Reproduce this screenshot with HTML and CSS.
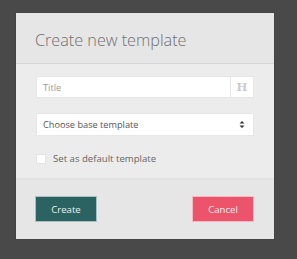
FILE: index.html
```html
<!DOCTYPE html>
<html>
<head><meta charset="utf-8"><link rel="stylesheet" href="styles.css"></head>
<body>
<div class="modal">
  <div class="modal-header">Create new template</div>
  <div class="modal-body">
    <div class="input-group">
      <span class="input-text">Title</span>
      <span class="input-addon">H</span>
    </div>
    <div class="select">
      <span class="input-text dark">Choose base template</span>
      <svg class="caret" width="6" height="9" viewBox="0 0 6 9"><path d="M0.5 3.5 L3 1 L5.5 3.5 Z M0.5 5.5 L3 8 L5.5 5.5 Z" fill="#333"/></svg>
    </div>
    <label class="check"><span class="box"></span><span>Set as default template</span></label>
  </div>
  <div class="modal-footer">
    <button class="btn btn-create">Create</button>
    <button class="btn btn-cancel">Cancel</button>
  </div>
</div>
</body>
</html>
```
FILE: styles.css
```css
html, body { margin: 0; padding: 0; }
body {
  background: #494949;
  width: 297px;
  height: 259px;
  font-family: "Open Sans", sans-serif;
  padding: 13px 0 0 16px;
  box-sizing: border-box;
}
.modal {
  width: 258px;
  background: #ececec;
  box-shadow: 0 0 1px rgba(0,0,0,0.4);
}
.modal-header {
  background: #e6e6e6;
  height: 51px;
  border-bottom: 1px solid #d6d6d6;
  box-sizing: border-box;
  padding: 16px 0 0 19px;
  font-size: 16.2px;
  font-weight: 300;
  color: #707070;
  line-height: 22px;
}
.modal-body {
  padding: 12px 20px 0 20px;
  height: 116px;
  box-sizing: border-box;
  border-bottom: 2px solid #e2e2e2;
}
.input-group, .select {
  height: 22px;
  background: #fff;
  display: flex;
  align-items: center;
  border: 1px solid #e6e6e6;
  box-sizing: border-box;
  width: 218px;
}
.input-text {
  flex: 1;
  padding-left: 6px;
  font-size: 9.2px;
  color: #999;
}
.input-text.dark { color: #555; }
.input-addon {
  width: 22px;
  height: 20px;
  border-left: 1px solid #e6e6e6;
  display: flex;
  align-items: center;
  justify-content: center;
  font-family: "DejaVu Serif", serif;
  font-weight: bold;
  font-size: 11.5px;
  color: #ccc;
}
.select { margin-top: 15px; height: 23px; }
.caret { margin-right: 8px; }
.check {
  display: flex;
  align-items: center;
  margin-top: 16px;
  font-size: 9.6px;
  color: #666;
}
.box {
  width: 8px;
  height: 8px;
  background: #fff;
  border: 1px solid #e4e4e4;
  margin-right: 7px;
}
.modal-footer {
  background: #e6e6e6;
  height: 59px;
  display: flex;
  justify-content: space-between;
  align-items: flex-start;
  padding: 16px 20px 0 19px;
  box-sizing: border-box;
}
.btn {
  width: 62px;
  height: 26px;
  border: 1px solid rgba(255,255,255,0.6);
  font-family: "Open Sans", sans-serif;
  font-size: 9.6px;
  color: #eee;
  padding: 0;
}
.btn-create { background: #2a6361; }
.btn-cancel { background: #eb546a; }
```
